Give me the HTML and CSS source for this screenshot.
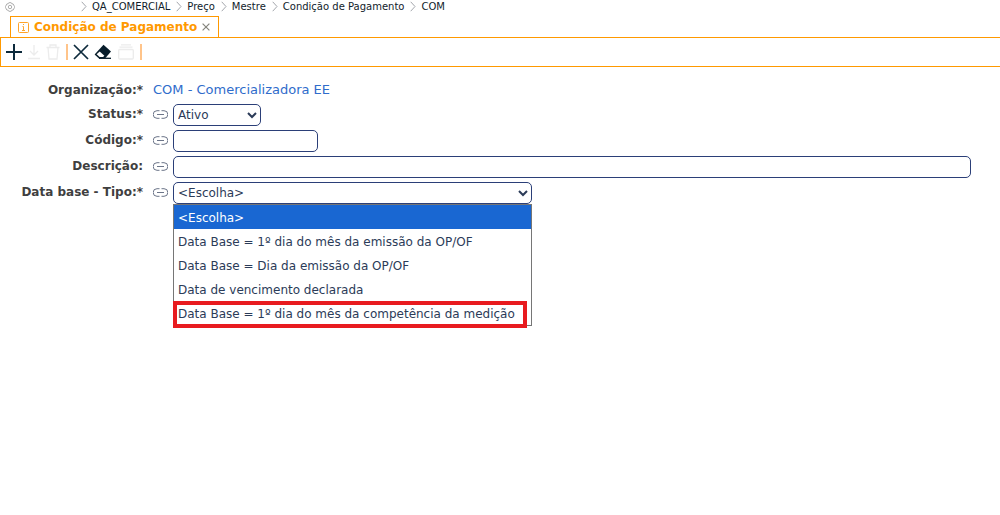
FILE: index.html
```html
<!DOCTYPE html>
<html lang="pt-BR">
<head>
<meta charset="utf-8">
<title>Condição de Pagamento</title>
<meta name="viewport" content="width=device-width, initial-scale=1">
<link rel="stylesheet" href="styles.css">
</head>
<body>
<svg class="defs" aria-hidden="true">
  <symbol id="chevron" viewBox="0 0 6 11"><path d="M.7 .8 5 5.500.7 10.200" fill="none" stroke="#a3a6ac"/></symbol>
  <symbol id="link" viewBox="0 0 15 9"><path d="M6.500 .7H4a3.700 3.700 0 0 0 0 7.600h2.500M8.500 .7H11a3.700 3.700 0 0 1 0 7.600H8.500M4 4.500h7" fill="none" stroke="#6c7589"/></symbol>
</svg>
<nav class="crumbs" aria-label="Navegação">
  <button class="icon-button gear" type="button" aria-label="Configurações">
    <svg width="10" height="10" viewBox="0 0 10 10" fill="none" stroke="#a6a6a6" stroke-width=".9"><path d="M3.800 .7h2.400l.6 1.100 1.300.1L9.500 4.500v1L8.200 8l-1.400.2-.6 1.100H3.800L3.200 8.200 1.800 8 .5 5.500v-1l1.400-2.600 1.300-.1z"/><circle cx="5" cy="5" r="1.700"/></svg>
  </button>
  <svg class="sep" aria-hidden="true"><use href="#chevron"/></svg>
  <a href="#">QA_COMERCIAL</a>
  <svg class="sep" aria-hidden="true"><use href="#chevron"/></svg>
  <a href="#">Preço</a>
  <svg class="sep" aria-hidden="true"><use href="#chevron"/></svg>
  <a href="#">Mestre</a>
  <svg class="sep" aria-hidden="true"><use href="#chevron"/></svg>
  <a href="#">Condição de Pagamento</a>
  <svg class="sep" aria-hidden="true"><use href="#chevron"/></svg>
  <a href="#">COM</a>
</nav>
<main>
  <div class="tabs">
    <div class="tab">
      <svg width="11" height="11" viewBox="0 0 11 11" fill="none" stroke="#ffa42b" aria-hidden="true"><rect x=".5" y=".5" width="10" height="10" rx="1"/><path d="M5 2.500h1M4.500 4.500h1v4M4 8.500h3"/></svg>
      <h1>Condição de Pagamento</h1>
      <button class="icon-button" type="button" aria-label="Fechar">
        <svg width="8" height="8" viewBox="0 0 8 8" stroke="#85857d" stroke-width="1.200"><path d="m.6.6 6.800 6.800M7.400.6.600 7.400"/></svg>
      </button>
    </div>
  </div>
  <div class="toolbar" role="toolbar" aria-label="Ações">
    <button class="icon-button" type="button" aria-label="Novo"><svg width="16" height="16" viewBox="0 0 16 16" stroke="#0d2a3c" stroke-width="2"><path d="M8 0v16M0 8h16"/></svg></button>
    <button class="icon-button" type="button" aria-label="Salvar" disabled><svg width="14" height="16" viewBox="1 0 14 16" fill="none" stroke="#ececec" stroke-width="1.300"><path d="M8 1v10M4 7l4 4 4-4M2 14.500h12"/></svg></button>
    <button class="icon-button" type="button" aria-label="Excluir" disabled><svg width="15" height="16" viewBox="1 0 15 16" fill="none" stroke="#ececec" stroke-width="1.300"><path d="M1.500 3.500h13M5 3.500v-2.500h6v2.500M3 3.500l1 11.500h8l1-11.500"/></svg></button>
    <span class="divider"></span>
    <button class="icon-button" type="button" aria-label="Cancelar"><svg width="16" height="16" viewBox="0 0 16 16" stroke="#0d2a3c" stroke-width="1.700"><path d="m1 1 14 14M15 1 1 15"/></svg></button>
    <button class="icon-button" type="button" aria-label="Limpar"><svg width="18" height="16" viewBox="0 0 18 16"><path d="M9.500 .8 17 7.500 11 14.500H5L.6 10.500z" fill="#081d2b"/><path d="m5.700 7.500 4.700 4.300-1.300 1.300H5.600L2.600 10.300z" fill="#fff"/><path d="M5 14.300h12" stroke="#081d2b" stroke-width="1.300"/></svg></button>
    <button class="icon-button duplicate" type="button" aria-label="Duplicar" disabled><svg width="16" height="16" viewBox="0 0 16 16" fill="none" stroke="#ececec" stroke-width="1.300"><rect x=".7" y="5.500" width="14.600" height="9.500" rx="1"/><path d="M1.500 3.200h13M3 .8h10"/></svg></button>
    <span class="divider"></span>
  </div>
  <form class="form">
    <div class="row org"><span class="label">Organização:*</span><a class="value" href="#">COM - Comercializadora EE</a></div>
    <div class="row"><label class="label" for="status">Status:*</label><svg class="link" aria-hidden="true"><use href="#link"/></svg>
      <select class="field status" id="status"><option>Ativo</option></select></div>
    <div class="row"><label class="label" for="codigo">Código:*</label><svg class="link" aria-hidden="true"><use href="#link"/></svg>
      <input class="field codigo" id="codigo" type="text"></div>
    <div class="row"><label class="label" for="descricao">Descrição:</label><svg class="link" aria-hidden="true"><use href="#link"/></svg>
      <input class="field" id="descricao" type="text"></div>
    <div class="row"><label class="label" for="tipo">Data base - Tipo:*</label><svg class="link" aria-hidden="true"><use href="#link"/></svg>
      <div class="combo">
        <select class="field" id="tipo"><option>&lt;Escolha&gt;</option></select>
        <ul class="options" role="listbox" aria-label="Data base - Tipo">
          <li class="option selected" role="option" aria-selected="true">&lt;Escolha&gt;</li>
          <li class="option" role="option">Data Base = 1º dia do mês da emissão da OP/OF</li>
          <li class="option" role="option">Data Base = Dia da emissão da OP/OF</li>
          <li class="option" role="option">Data de vencimento declarada</li>
          <li class="option marked" role="option">Data Base = 1º dia do mês da competência da medição</li>
        </ul>
      </div></div>
  </form>
</main>
</body>
</html>
```
FILE: styles.css
```css
* { box-sizing: border-box; }
body {
  min-height: 100vh;
  margin: 0;
  background: #fff;
  color: #2b3b58;
  font: 12px/16px "DejaVu Sans", Verdana, sans-serif;
}
svg { display: block; flex: none; }
.defs { position: absolute; width: 0; height: 0; }
.icon-button { display: block; padding: 0; border: 0; background: none; }

.crumbs { display: flex; align-items: center; height: 13px; padding-left: 5px; font-size: 10px; line-height: 13px; }
.crumbs a { color: #111c2b; text-decoration: none; white-space: nowrap; }
.gear { margin-right: 60px; }
.sep { width: 6px; height: 11px; margin: 0 5px 0 6px; }

.tabs { display: flex; padding: 3px 0 0 10px; }
.tab {
  display: flex;
  align-items: center;
  gap: 5px;
  height: 21px;
  padding: 0 8px 0 7px;
  border: 1px solid #ff9900;
  border-bottom: 0;
}
.tab h1 { margin: 0; color: #ff9900; font-size: 12px; line-height: 16px; white-space: nowrap; }

.toolbar {
  display: flex;
  align-items: center;
  gap: 5px;
  height: 30px;
  padding-left: 5px;
  border: 1px solid #ff9900;
  border-right: 0;
}
.divider { width: 2px; height: 16px; background: #ffc48a; }
.duplicate { margin: 0 1px; }

.form { display: flex; flex-direction: column; gap: 4px; padding: 14px 29px 0 0; }
.row { display: grid; grid-template-columns: 143px 30px minmax(0, 1fr); align-items: start; }
.row.org { grid-template-columns: 143px minmax(0, 1fr); height: 19px; }
.label { color: #3f3f3f; font-weight: bold; line-height: 20px; text-align: right; white-space: nowrap; }
.org .label, .value { line-height: 18px; }
.value { margin-left: 10px; color: #2f6ccb; font-size: 13px; text-decoration: none; }
.link { width: 15px; height: 9px; margin: 6px 0 0 10px; }
.field {
  display: block;
  width: 100%;
  height: 22px;
  margin: 0;
  padding: 0;
  border: 1px solid #2b3f78;
  border-radius: 5px;
  background: #fff;
  color: #2b3b58;
  font: inherit;
}
.status { width: 88px; }
.codigo { width: 145px; }
.combo { position: relative; width: 359px; }

.options {
  position: absolute;
  top: 100%;
  left: 0;
  right: 0;
  margin: 0;
  padding: 0;
  border: 1px solid #767676;
  background: #fff;
  list-style: none;
}
.option { height: 24px; padding: 1px 4px 0; line-height: 24px; white-space: nowrap; }
.selected { background: #1967d2; color: #fff; }
.marked { position: relative; }
.marked::after {
  content: "";
  position: absolute;
  inset: 0 4px -3px -1px;
  border: 4px solid #e81b1f;
}
```
